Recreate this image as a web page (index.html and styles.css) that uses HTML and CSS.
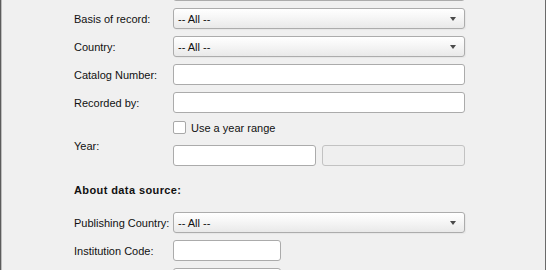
FILE: index.html
```html
<!DOCTYPE html>
<html>
<head>
<meta charset="utf-8">
<link rel="stylesheet" href="styles.css">
</head>
<body>
<div class="panel">
  <div class="form">
    <div class="label"></div>
    <div class="input"></div>

    <div class="label">Basis of record:</div>
    <div class="select"><span>-- All --</span><i class="arrow"></i></div>

    <div class="label">Country:</div>
    <div class="select"><span>-- All --</span><i class="arrow"></i></div>

    <div class="label">Catalog Number:</div>
    <div class="input"></div>

    <div class="label">Recorded by:</div>
    <div class="input"></div>

    <div class="label year-label">Year:</div>
    <div class="year">
      <label class="check"><span class="box"></span><span>Use a year range</span></label>
      <div class="year-inputs">
        <div class="input"></div>
        <div class="input disabled"></div>
      </div>
    </div>

    <div class="section">About data source:</div>

    <div class="label">Publishing Country:</div>
    <div class="select"><span>-- All --</span><i class="arrow"></i></div>

    <div class="label">Institution Code:</div>
    <div class="input short"></div>

    <div class="label"></div>
    <div class="input short"></div>
  </div>
</div>
</body>
</html>
```

FILE: styles.css
```css
html, body {
  margin: 0;
  padding: 0;
  background: #f0f0f0;
}
.panel {
  box-sizing: border-box;
  width: 546px;
  height: 270px;
  overflow: hidden;
  background: #f0f0f0;
  border-left: 1px solid #5c5c5c;
  border-right: 1px solid #6a6a6a;
  box-shadow: inset 1px 0 0 #bdbdbd;
  font-family: "Liberation Sans", Arial, sans-serif;
  font-size: 11px;
  color: #111;
}
.form {
  display: grid;
  grid-template-columns: 99px 292px;
  grid-template-rows: 21px 21px 21px 21px 21px 46px 32px 21px 21px 21px;
  row-gap: 7px;
  margin-top: -20px;
  padding-left: 73px;
}
.label {
  display: flex;
  align-items: center;
  white-space: nowrap;
}
.input {
  box-sizing: border-box;
  height: 21px;
  background: #fff;
  border: 1px solid #ababab;
  border-radius: 3px;
}
.input.disabled {
  background: #efefef;
  border-color: #c2c2c2;
}
.input.short {
  width: 108px;
}
.select {
  box-sizing: border-box;
  height: 21px;
  display: flex;
  align-items: center;
  justify-content: space-between;
  padding: 0 8px 0 4px;
  border: 1px solid #acacac;
  border-radius: 3px;
  background: linear-gradient(#ffffff, #f6f6f6 45%, #e9e9e9);
  box-shadow: 1px 1px 1px rgba(0,0,0,0.04);
}
.arrow {
  width: 0;
  height: 0;
  border-left: 3.5px solid transparent;
  border-right: 3.5px solid transparent;
  border-top: 4px solid #4a4a4a;
  margin-top: 1px;
}
.year-label {
  align-self: start;
  height: 46px;
  padding-top: 6px;
  box-sizing: border-box;
}
.year {
  align-self: start;
  height: 46px;
  display: flex;
  flex-direction: column;
  gap: 10px;
}
.check {
  display: flex;
  align-items: center;
  gap: 5px;
  height: 15px;
}
.box {
  box-sizing: border-box;
  width: 13px;
  height: 13px;
  background: #fff;
  border: 1px solid #a8a8a8;
  border-radius: 2px;
}
.year-inputs {
  display: grid;
  grid-template-columns: 143px 143px;
  column-gap: 6px;
}
.section {
  grid-column: 1 / span 2;
  display: flex;
  align-items: center;
  font-weight: bold;
  letter-spacing: 0.4px;
  padding-top: 1px;
}
```
